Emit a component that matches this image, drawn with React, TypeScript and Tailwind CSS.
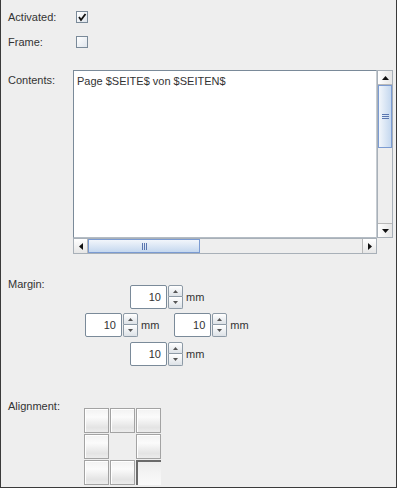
import React from "react";

const Check = ({ checked }: { checked?: boolean }) => (
  <div className="w-[12px] h-[12px] border border-[#7a8a99] bg-[linear-gradient(135deg,#ffffff,#dfe5ec)] relative">
    {checked && (
      <svg className="absolute left-0 top-0" width="10" height="10" viewBox="0 0 10 10">
        <path d="M2 5 L4 8 L8.5 2" stroke="#111" strokeWidth="1.8" fill="none" />
      </svg>
    )}
  </div>
);

const Tri = ({ dir }: { dir: "up" | "down" | "left" | "right" }) => {
  const pts =
    dir === "up"
      ? "0,4 7,4 3.5,0"
      : dir === "down"
      ? "0,0 7,0 3.5,4"
      : dir === "left"
      ? "4,0 4,7 0,3.5"
      : "0,0 0,7 4,3.5";
  const w = dir === "up" || dir === "down" ? 7 : 4;
  const h = dir === "up" || dir === "down" ? 4 : 7;
  return (
    <svg width={w} height={h} viewBox={`0 0 ${w} ${h}`}>
      <polygon points={pts} fill="#111" />
    </svg>
  );
};

const SmallTri = ({ up }: { up?: boolean }) => (
  <svg width="5" height="3" viewBox="0 0 5 3">
    <polygon points={up ? "0,3 5,3 2.5,0" : "0,0 5,0 2.5,3"} fill="#555" />
  </svg>
);

const Spinner = () => (
  <div className="flex items-center">
    <div className="w-[37px] h-[24px] border border-[#7a8a99] rounded-[2px] bg-white text-right pr-[5px] leading-[22px]">
      10
    </div>
    <div className="ml-[1px] w-[15px] h-[24px] flex flex-col">
      <div className="h-[12px] border border-[#8d9aa6] rounded-t-[2px] bg-[linear-gradient(to_bottom,#ffffff,#dde2e7)] flex items-center justify-center">
        <SmallTri up />
      </div>
      <div className="h-[12px] border border-t-0 border-[#8d9aa6] rounded-b-[2px] bg-[linear-gradient(to_bottom,#ffffff,#dde2e7)] flex items-center justify-center">
        <SmallTri />
      </div>
    </div>
    <span className="ml-[3px]">mm</span>
  </div>
);

const Cell = ({ selected, empty }: { selected?: boolean; empty?: boolean }) => {
  if (empty) return <div className="w-[25px] h-[25px]" />;
  if (selected)
    return (
      <div className="w-[25px] h-[25px] border-t-2 border-l-2 border-[#6a6a6a] bg-[linear-gradient(to_bottom,#ececec,#f4f4f4_50%,#fafafa)]" />
    );
  return (
    <div className="w-[25px] h-[25px] border border-[#a3a3a3] bg-[linear-gradient(to_bottom,#f2f2f2,#fbfbfb_35%,#e4e4e4_80%,#ececec)] shadow-[inset_1px_1px_0_#ffffff]" />
  );
};

export default function App() {
  return (
    <div
      className="w-[397px] h-[488px] bg-[#eeeeee] border-l border-r border-b border-[#3a3a3a] pl-[7px] text-[11px] text-[#333333] overflow-hidden"
      style={{ fontFamily: '"Liberation Sans", Arial, sans-serif' }}
    >
      <div className="pt-[5px]">
        <div className="flex items-center h-[24px]">
          <div className="w-[68px]">Activated:</div>
          <Check checked />
        </div>
        <div className="flex items-center h-[24px] mt-[1px]">
          <div className="w-[68px]">Frame:</div>
          <Check />
        </div>
      </div>

      <div className="flex items-start mt-[16px]">
        <div className="w-[65px] pt-[4px] leading-[12px]">Contents:</div>
        <div className="w-[320px] h-[184px] flex flex-col">
          <div className="flex h-[168px]">
            <div className="flex-1 bg-white border-t border-l border-[#7a8a99] border-b border-b-[#b4bcc4] border-r border-r-[#c6ccd2] pl-[3px] pt-[4px] leading-[12px]">
              Page $SEITE$ von $SEITEN$
            </div>
            <div className="w-[16px] flex flex-col border border-[#a8b0b8] bg-[#eeeeee]">
              <div className="h-[14px] bg-[linear-gradient(to_right,#ffffff,#e6e6e6)] border-b border-[#b8b8b8] flex items-center justify-center">
                <Tri dir="up" />
              </div>
              <div className="h-[63px] border border-[#7b9bd2] bg-[linear-gradient(to_right,#f2f6fb,#c5d8ef)] flex flex-col items-center justify-center gap-[1px]">
                <div className="w-[7px] h-[1px] bg-[#5a76b0]" />
                <div className="w-[7px] h-[1px] bg-[#5a76b0]" />
                <div className="w-[7px] h-[1px] bg-[#5a76b0]" />
              </div>
              <div className="flex-1" />
              <div className="h-[14px] bg-[linear-gradient(to_right,#ffffff,#e6e6e6)] border-t border-[#b8b8b8] flex items-center justify-center">
                <Tri dir="down" />
              </div>
            </div>
          </div>
          <div className="flex h-[16px]">
            <div className="w-[304px] flex border border-[#a8b0b8] bg-[#eeeeee]">
              <div className="w-[14px] bg-[linear-gradient(to_bottom,#ffffff,#e6e6e6)] border-r border-[#b8b8b8] flex items-center justify-center">
                <Tri dir="left" />
              </div>
              <div className="w-[112px] border border-[#7b9bd2] bg-[linear-gradient(to_bottom,#f2f6fb,#c5d8ef)] flex items-center justify-center gap-[1px]">
                <div className="w-[1px] h-[7px] bg-[#5a76b0]" />
                <div className="w-[1px] h-[7px] bg-[#5a76b0]" />
                <div className="w-[1px] h-[7px] bg-[#5a76b0]" />
              </div>
              <div className="flex-1" />
              <div className="w-[14px] bg-[linear-gradient(to_bottom,#ffffff,#e6e6e6)] border-l border-[#b8b8b8] flex items-center justify-center">
                <Tri dir="right" />
              </div>
            </div>
            <div className="w-[16px]" />
          </div>
        </div>
      </div>

      <div className="flex items-start mt-[24px]">
        <div className="w-[77px] leading-[13px]">Margin:</div>
        <div className="pt-[7px]">
          <div className="pl-[45px]">
            <Spinner />
          </div>
          <div className="flex gap-[15px] mt-[4px]">
            <Spinner />
            <Spinner />
          </div>
          <div className="pl-[45px] mt-[5px]">
            <Spinner />
          </div>
        </div>
      </div>

      <div className="flex items-start mt-[34px]">
        <div className="w-[76px] leading-[13px]">Alignment:</div>
        <div className="pt-[8px] grid grid-cols-[25px_25px_25px] gap-[1px]">
          <Cell />
          <Cell />
          <Cell />
          <Cell />
          <Cell empty />
          <Cell />
          <Cell />
          <Cell />
          <Cell selected />
        </div>
      </div>
    </div>
  );
}
